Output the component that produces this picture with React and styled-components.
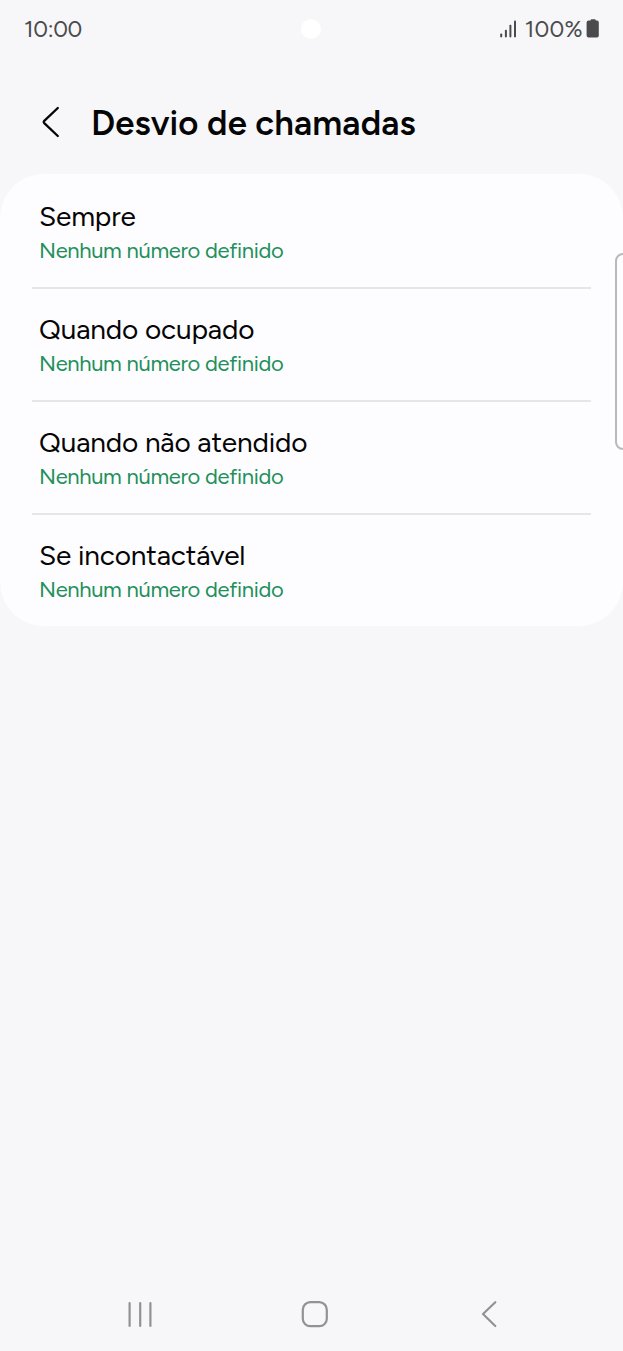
import styled, { createGlobalStyle } from "styled-components";

const GlobalStyle = createGlobalStyle`
  * {
    box-sizing: border-box;
  }

  body {
    margin: 0;
    background: #f7f7f9;
    font-family: Figtree, Inter, "Liberation Sans", sans-serif;
  }
`;

const Screen = styled.div`
  position: relative;
  display: flex;
  flex-direction: column;
  width: 623px;
  height: 1351px;
  overflow: hidden;
  background: #f7f7f9;
`;

const StatusBar = styled.div`
  display: flex;
  align-items: center;
  justify-content: space-between;
  height: 58px;
  padding: 0 23px 0 24px;
  color: #4b4b4d;
`;

const StatusText = styled.span`
  font-size: 23px;
  line-height: 28px;
  letter-spacing: ${(props) => props.$spacing};
  white-space: nowrap;
`;

const StatusRight = styled.div`
  display: flex;
  align-items: center;
`;

const SignalIcon = styled.svg`
  width: 18px;
  height: 18px;
  margin-right: 7px;
`;

const BatteryIcon = styled.svg`
  width: 14px;
  height: 20px;
  margin-left: 3px;
`;

const Camera = styled.div`
  position: absolute;
  top: 19px;
  left: 301px;
  width: 20px;
  height: 20px;
  border-radius: 50%;
  background: #ffffff;
`;

const Header = styled.header`
  display: flex;
  align-items: center;
  height: 116px;
  padding: 12px 0 0 40px;
`;

const BackIcon = styled.svg`
  width: 22px;
  height: 34px;
  margin: 0 29px 0 0;
`;

const Title = styled.h1`
  margin: 0;
  padding-top: 2px;
  color: #050506;
  font-size: 34.7px;
  font-weight: 600;
  line-height: 40px;
  letter-spacing: 0.1px;
  white-space: nowrap;
`;

const Card = styled.ul`
  margin: 0;
  padding: 0 32px;
  height: 452px;
  list-style: none;
  border-radius: 44px;
  background: #fdfdff;
`;

const Row = styled.li`
  height: 113px;
  padding: 23px 7px 0;
  border-top: 2px solid #e6e6e8;

  &:first-child {
    border-color: transparent;
  }
`;

const Label = styled.div`
  margin-bottom: 1px;
  color: #050506;
  font-size: 28px;
  line-height: 34px;
  letter-spacing: -0.15px;
  white-space: nowrap;
`;

const Value = styled.div`
  color: #23905a;
  font-size: 22px;
  line-height: 33px;
  letter-spacing: -0.35px;
  white-space: nowrap;
`;

const EdgeHandle = styled.div`
  position: absolute;
  top: 253px;
  left: 615px;
  width: 20px;
  height: 197px;
  border: 2px solid #b9b9bb;
  border-radius: 8px;
`;

const NavBar = styled.nav`
  display: flex;
  justify-content: space-between;
  align-items: center;
  height: 74px;
  margin-top: auto;
  padding: 0 119px 0 125px;
`;

const NavIcon = styled.svg`
  width: 30px;
  height: 30px;
  fill: none;
  stroke: #929294;
  stroke-width: 2.2;
  stroke-linecap: round;
  stroke-linejoin: round;
`;

const options = [
  "Sempre",
  "Quando ocupado",
  "Quando não atendido",
  "Se incontactável",
];

const App = () => {
  return (
    <Screen>
      <GlobalStyle />
      <StatusBar>
        <StatusText $spacing="-0.3px">10:00</StatusText>
        <StatusRight>
          <SignalIcon viewBox="0 0 18 18" fill="#4b4b4d">
            <rect x="0.2" y="13.4" width="2" height="4" rx="0.8" />
            <rect x="4.9" y="9.8" width="2" height="7.6" rx="0.8" />
            <rect x="9.4" y="4.8" width="2" height="12.6" rx="0.8" />
            <rect x="14" y="0.6" width="2" height="16.8" rx="0.8" />
          </SignalIcon>
          <StatusText $spacing="0.3px">100%</StatusText>
          <BatteryIcon viewBox="0 0 14 20" fill="#4b4b4d">
            <path d="M4.6 1.6V1.2Q4.6 .3 5.5 .3H8.8Q9.7 .3 9.7 1.2V1.6H11Q12.8 1.6 12.8 3.6V16.4Q12.8 18.4 11 18.4H2.6Q.6 18.4 .6 16.4V3.6Q.6 1.6 2.6 1.6Z" />
          </BatteryIcon>
        </StatusRight>
      </StatusBar>
      <Camera />
      <Header>
        <BackIcon
          viewBox="0 0 22 34"
          fill="none"
          stroke="#050506"
          strokeWidth="2.3"
          strokeLinecap="round"
          strokeLinejoin="round"
        >
          <path d="M17.8 3 4 16.2Q3.3 17 4 17.8L17.8 31" />
        </BackIcon>
        <Title>Desvio de chamadas</Title>
      </Header>
      <Card>
        {options.map((label) => (
          <Row key={label}>
            <Label>{label}</Label>
            <Value>Nenhum número definido</Value>
          </Row>
        ))}
      </Card>
      <EdgeHandle />
      <NavBar>
        <NavIcon viewBox="0 0 30 30">
          <path d="M4.6 4V27M15.2 4V27M25.4 4V27" />
        </NavIcon>
        <NavIcon viewBox="0 0 30 30">
          <rect x="2.8" y="3.2" width="24" height="24" rx="7.5" />
        </NavIcon>
        <NavIcon viewBox="0 0 30 30">
          <path d="M21.3 3.2 9 15 21.3 27" />
        </NavIcon>
      </NavBar>
    </Screen>
  );
};

export default App;
